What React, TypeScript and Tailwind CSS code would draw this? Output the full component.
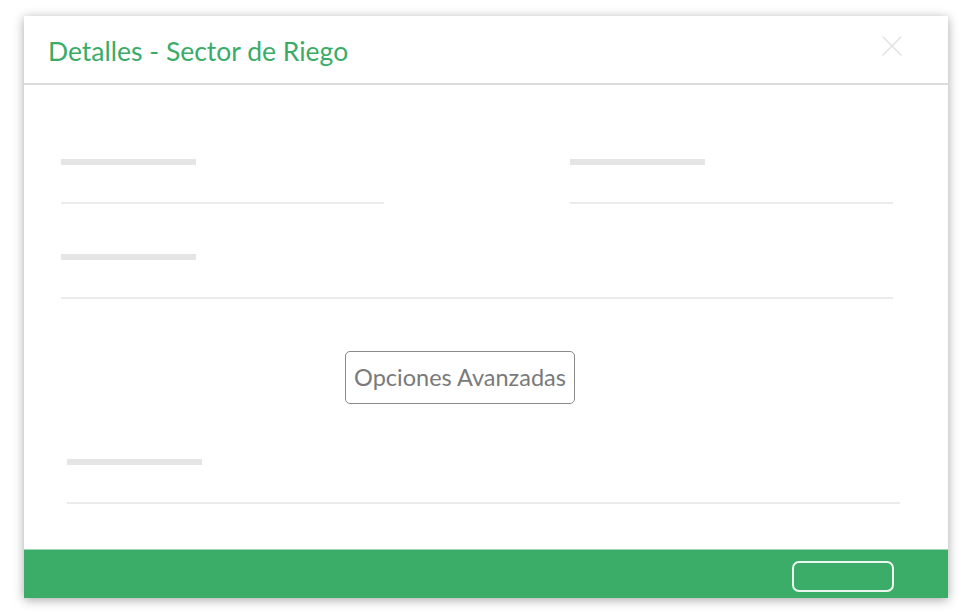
import { X } from "lucide-react";

const font = { fontFamily: "Lato, 'Open Sans', sans-serif" };

function Field({ className = "" }: { className?: string }) {
  return (
    <div className={"flex flex-col " + className}>
      <div className="h-[6px] w-[135px] bg-[#e5e5e5]" />
      <div className="h-[37px]" />
      <div className="h-[2px] w-full bg-[#ebebeb]" />
    </div>
  );
}

export default function App() {
  return (
    <div className="min-h-[615px] w-[973px] bg-white pt-[16px]" style={font}>
      <div className="ml-[24px] flex h-[582px] w-[924px] flex-col bg-white shadow-[0_2px_10px_rgba(0,0,0,0.35)]">
        <div className="flex h-[69px] items-center justify-between border-b-2 border-[#dcdcdc] pl-[24px] pr-[38px]">
          <h1 className="pt-[5px] text-[26.5px] text-[#3aac68]">Detalles - Sector de Riego</h1>
          <X className="mt-[-7px] h-[36px] w-[36px] text-[#e2e2e2]" strokeWidth={1} />
        </div>

        <div className="flex flex-1 flex-col">
          <div className="pl-[37px] pr-[55px] pt-[74px]">
            <div className="grid grid-cols-2 gap-x-[186px]">
              <Field />
              <Field />
            </div>
            <Field className="mt-[50px]" />
          </div>

          <div className="mt-[52px] flex justify-center pr-[52px]">
            <button className="h-[53px] w-[230px] rounded-[5px] border border-[#8a8a8a] text-[23.5px] text-[#7a7a7a]">
              Opciones Avanzadas
            </button>
          </div>

          <div className="pl-[43px] pr-[48px]">
            <Field className="mt-[55px]" />
          </div>
        </div>

        <div className="flex h-[49px] items-start justify-end border-t border-[#9fd8b5] bg-[#3bad69] pr-[54px] pt-[11px]">
          <button className="h-[31px] w-[102px] rounded-[7px] border-2 border-white/90" />
        </div>
      </div>
    </div>
  );
}
